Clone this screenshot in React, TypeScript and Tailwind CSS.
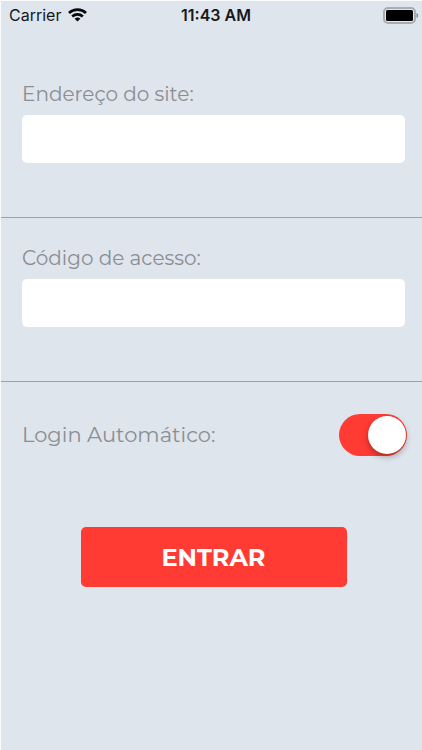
import { useState } from "react";

function StatusBar() {
  return (
    <header className="grid grid-cols-3 items-center h-7 pl-2 pr-[3px] font-['Inter',sans-serif] text-[#16181b]">
      <div className="flex items-center gap-[7px] text-base">
        <span>Carrier</span>
        <svg width="19" height="14" viewBox="0 0 19 14" fill="none" stroke="#08090a" strokeWidth="2.7" aria-hidden="true">
          <path d="M1 4.9C5.8.5 13.2.5 18 4.9" />
          <path d="M4.2 8.4c3-2.8 7.6-2.8 10.6 0" />
          <path d="M9.5 13.6 6.6 10.7c1.6-1.5 4.2-1.5 5.8 0z" fill="#08090a" stroke="none" />
        </svg>
      </div>
      <span className="pl-1 text-center text-base font-semibold whitespace-nowrap">11:43 AM</span>
      <svg className="justify-self-end" width="36" height="17" viewBox="0 0 36 17" aria-hidden="true">
        <rect x="1" y="1" width="31" height="15" rx="4" fill="#dfe5ec" stroke="#a9adb2" strokeWidth="2" />
        <rect x="3" y="3" width="27" height="11" rx="1.5" fill="#000" />
        <path d="M33.5 6c2.2.6 2.2 4.4 0 5z" fill="#85888c" />
      </svg>
    </header>
  );
}

type FieldProps = {
  id: string;
  label: string;
  type: string;
};

function Field({ id, label, type }: FieldProps) {
  return (
    <section className="flex flex-col items-start pt-6 pb-[54px] pl-[21px] pr-[17px] border-b border-[#9da1a6]">
      <label htmlFor={id} className="text-xl leading-8">
        {label}
      </label>
      <input
        id={id}
        type={type}
        className="mt-[5px] w-full h-12 px-3 rounded-[5px] bg-white text-lg text-gray-700 outline-none"
      />
    </section>
  );
}

export default function App() {
  const [autoLogin, setAutoLogin] = useState(true);

  return (
    <div className="flex flex-col min-h-screen pt-px pl-px bg-[#fafbfc]">
      <main className="grow bg-[#dfe5ec] font-['Montserrat','Inter',sans-serif] text-[#8b8e92]">
        <StatusBar />
        <form className="pt-[25px]" onSubmit={(e) => e.preventDefault()}>
          <Field id="site" label="Endereço do site:" type="text" />
          <Field id="code" label="Código de acesso:" type="password" />

          <div className="flex items-center justify-between pt-8 pl-[21px] pr-[15px]">
            <label htmlFor="auto" className="text-[21px] leading-8">
              Login Automático:
            </label>
            <input
              id="auto"
              type="checkbox"
              role="switch"
              checked={autoLogin}
              onChange={(e) => setAutoLogin(e.target.checked)}
              className="flex items-center appearance-none w-[68px] h-[42px] px-px rounded-full bg-gray-400 checked:bg-[#ff3b34] checked:justify-end before:size-[38px] before:rounded-full before:bg-white before:shadow-[0_3px_6px_rgba(0,0,0,0.3)]"
            />
          </div>

          <div className="flex justify-center pt-[71px] pl-1">
            <button type="submit" className="w-[266px] h-[60px] pt-0.5 rounded-[5px] bg-[#ff3b34] text-2xl font-bold text-white">
              ENTRAR
            </button>
          </div>
        </form>
      </main>
    </div>
  );
}
